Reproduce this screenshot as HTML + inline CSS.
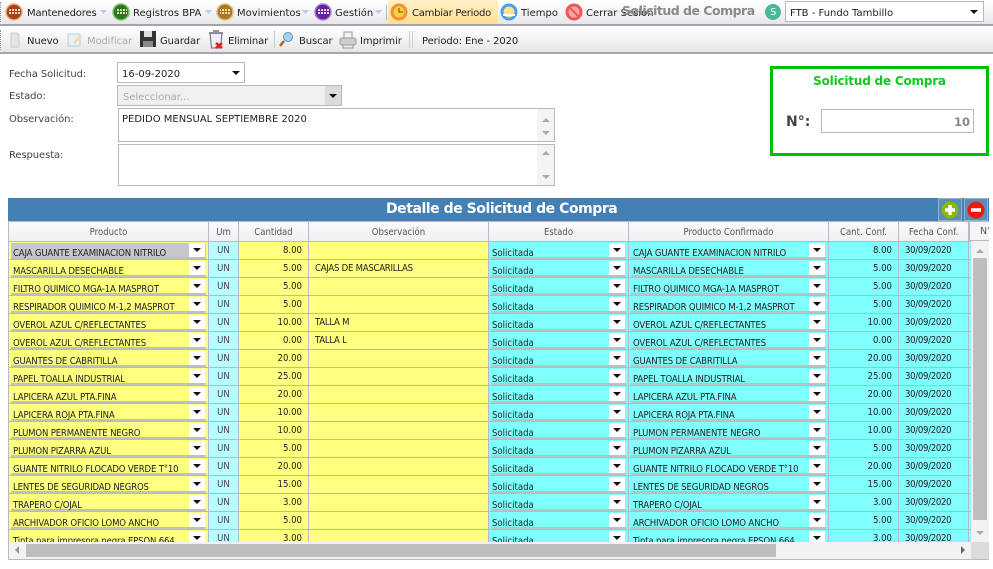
<!DOCTYPE html>
<html><head><meta charset="utf-8"><style>
*{box-sizing:border-box}
html,body{margin:0;padding:0;width:993px;height:569px;overflow:hidden;background:#fff;font:10px "DejaVu Sans","Liberation Sans",sans-serif;color:#222}
.a{position:absolute;white-space:nowrap}
.bar{position:absolute;left:0;width:993px;background:linear-gradient(#fff,#f4f4f6 50%,#e6e6ea);border-bottom:2px solid #a4a4ac}
.t{position:absolute;white-space:nowrap;line-height:12px}
.dis{color:#aaa}
svg{position:absolute;overflow:visible}
.box{position:absolute;border:1px solid #b2b8c4;background:#fff}
.tri{position:absolute;width:0;height:0;border-left:4px solid transparent;border-right:4px solid transparent;border-top:4px solid #111}
.lab{position:absolute;color:#444;line-height:12px;letter-spacing:-.1px}
.up{position:absolute;width:0;height:0;border-left:4px solid transparent;border-right:4px solid transparent;border-bottom:4px solid #aaa}
.dn{position:absolute;width:0;height:0;border-left:4px solid transparent;border-right:4px solid transparent;border-top:4px solid #aaa}
#g{position:absolute;left:8px;top:222px;width:963px;height:320px;overflow:hidden;font-family:"DejaVu Sans Condensed","DejaVu Sans",sans-serif;font-stretch:condensed}
table{border-collapse:collapse;table-layout:fixed;width:963px}
th{height:19px;padding:2px 0 0;font-weight:normal;color:#555;text-align:center;background:linear-gradient(#fafafc,#f0f0f2);border:1px solid #b4bac6;border-top:0;font-size:9.5px;overflow:hidden;white-space:nowrap}
td{height:18px;padding:0;border:1px solid #b4bac6;overflow:hidden;white-space:nowrap;position:relative;vertical-align:top;line-height:13px;font-size:9.5px}
.y{background:#ffff80}.c{background:#80ffff}
.c.u{background:#b8fcff}
.n{text-align:right;padding-right:6px;padding-top:2px}
.u{text-align:center;padding-top:2px;color:#445}
.o{padding:2px 0 0 6px;letter-spacing:-.25px}
.d{text-align:left;padding:2px 0 0 6px;letter-spacing:-.3px}
.s{position:absolute;left:2px;right:2px;top:1px;height:17px;border-bottom:3px solid #c0c0c4;padding:4px 0 0 1px;line-height:13px}
td:nth-child(1) .s,td:nth-child(6) .s{padding-left:2px;letter-spacing:-.17px}
.s i{position:absolute;right:1px;top:0;width:16px;height:14px;background:#fff}
.s i:after{content:"";position:absolute;left:4px;top:5px;border-left:4px solid transparent;border-right:4px solid transparent;border-top:4px solid #111}
.g1 .s.pp{background:#c8c8cc}
#tb2 .t{letter-spacing:-.1px}
</style></head><body>

<div class="bar" style="top:0;height:26px"></div>
<div class="bar" style="top:26px;height:28px"></div>
<div class="a" style="left:388px;top:0;width:110px;height:24px;background:linear-gradient(#fff0c8,#ffdf90)"></div>
<div class="a" style="left:0;top:2px;width:2px;height:20px;border-left:1px dotted #999"></div>
<div class="a" style="left:0;top:30px;width:2px;height:20px;border-left:1px dotted #999"></div>

<svg style="left:0;top:0" width="993" height="54">
<defs><pattern id="dt" width="3" height="3" patternUnits="userSpaceOnUse"><rect width="2" height="2" fill="#e8d8c8"/></pattern></defs>
<circle cx="14" cy="12" r="8" fill="#a8401e" stroke="#f0b080" stroke-width="1.500"/><rect x="9" y="9" width="11" height="6" fill="url(#dt)"/>
<circle cx="121" cy="12" r="8" fill="#267a1c" stroke="#80c070" stroke-width="1.500"/><rect x="116" y="9" width="11" height="6" fill="url(#dt)"/>
<circle cx="225" cy="12" r="8" fill="#a87820" stroke="#e0c070" stroke-width="1.500"/><rect x="220" y="9" width="11" height="6" fill="url(#dt)"/>
<circle cx="323" cy="12" r="8" fill="#66229a" stroke="#b080d8" stroke-width="1.500"/><rect x="318" y="9" width="11" height="6" fill="url(#dt)"/>
<path d="M100 10h7l-3.500 4zM205 10h7l-3.500 4zM302 10h7l-3.500 4zM375 10h7l-3.500 4z" fill="#b4cce8"/>
<path d="M386.500 5v15" stroke="#bbb"/>
<circle cx="399" cy="12" r="7" fill="#f8d040" stroke="#f09038" stroke-width="3"/><path d="M399 8v4h4" stroke="#a06010" stroke-width="1.300" fill="none"/>
<circle cx="509" cy="12" r="7" fill="#ffe090" stroke="#48a0e8" stroke-width="3"/><path d="M503 15h12" stroke="#fff" stroke-width="2"/>
<circle cx="574" cy="12" r="7" fill="#f8a8a8" stroke="#f05858" stroke-width="3"/><path d="M570 8l8 8" stroke="#f05858" stroke-width="2.200"/>
<circle cx="773" cy="12" r="8" fill="#48b898"/>
<path d="M11 33h6l2 2v12h-8z" fill="#e4e4e4" stroke="#ccc"/>
<path d="M68 34h12v12h-12z" fill="#e8f0f8" stroke="#b8cce0"/><path d="M73 42l7-7 2 2-7 7z" fill="#f0dca0"/>
<path d="M140 31h16v16h-16z" fill="#333"/><rect x="144" y="31" width="8" height="6" fill="#ddd"/><rect x="143" y="41" width="10" height="6" fill="#888"/>
<path d="M210 33h12l-1.500 15h-9z" fill="#eef" stroke="#667"/><path d="M209 33h14M213 31h6" stroke="#556" stroke-width="1.300"/>
<path d="M216 43l6 5M222 43l-6 5" stroke="#e02020" stroke-width="2.500"/>
<circle cx="288" cy="37" r="4.500" fill="#a8d0f0" stroke="#6890b8"/><path d="M284 41l-4 5" stroke="#a86830" stroke-width="2.500"/>
<path d="M344 32h8v6h-8z" fill="#f4f4f4" stroke="#999"/><rect x="340" y="38" width="16" height="7" rx="2" fill="#ccc" stroke="#999"/><path d="M343 45h10v3h-10z" fill="#eee" stroke="#999"/>
<path d="M274.500 31v17M409.500 31v17M412.500 31v17" stroke="#ccc"/>
</svg>
<div class="t" style="left:27px;top:8px;letter-spacing:-.15px">Mantenedores</div>
<div class="t" style="left:133px;top:8px">Registros BPA</div>
<div class="t" style="left:237px;top:8px">Movimientos</div>
<div class="t" style="left:335px;top:8px">Gestión</div>
<div class="t" style="left:412px;top:8px;letter-spacing:-.25px">Cambiar Periodo</div>
<div class="t" style="left:521px;top:8px">Tiempo</div>
<div class="t" style="left:586px;top:8px">Cerrar Sesión</div>
<div class="t" style="left:622px;top:3px;font-weight:bold;font-size:12.500px;letter-spacing:-.5px;color:#8a8a8a;line-height:15px">Solicitud de Compra</div>
<div class="t" style="left:770px;top:7px;color:#fff">S</div>
<div class="box" style="left:785px;top:1px;width:199px;height:21px;border-color:#b0b8cc"></div>
<div class="t" style="left:790px;top:8px">FTB - Fundo Tambillo</div>
<div class="tri" style="left:970px;top:10px"></div>
<div id="tb2">
<div class="t" style="left:27px;top:36px">Nuevo</div>
<div class="t dis" style="left:87px;top:36px">Modificar</div>
<div class="t" style="left:160px;top:36px">Guardar</div>
<div class="t" style="left:228px;top:36px">Eliminar</div>
<div class="t" style="left:299px;top:36px">Buscar</div>
<div class="t" style="left:360px;top:36px">Imprimir</div>
<div class="t" style="left:422px;top:36px">Periodo: Ene - 2020</div>
</div>

<div class="lab" style="left:9px;top:69px">Fecha Solicitud:</div>
<div class="lab" style="left:9px;top:91px">Estado:</div>
<div class="lab" style="left:9px;top:114px">Observación:</div>
<div class="lab" style="left:9px;top:150px">Respuesta:</div>
<div class="box" style="top:62px;height:21px;left:117px;width:128px"></div>
<div class="t" style="left:122px;top:69px">16-09-2020</div>
<div class="tri" style="left:232px;top:71px"></div>
<div class="box" style="left:117px;top:85px;width:225px;height:21px;background:#f0f0f0"></div>
<div class="a" style="left:325px;top:86px;width:16px;height:19px;background:#dcdcdc"></div>
<div class="t" style="left:123px;top:92px;color:#aaa">Seleccionar...</div>
<div class="tri" style="left:329px;top:94px"></div>
<div class="box" style="left:118px;top:108px;width:437px;height:34px"></div>
<div class="a" style="left:537px;top:109px;width:17px;height:32px;background:#f4f4f4"></div>
<div class="t" style="left:122px;top:114px">PEDIDO MENSUAL SEPTIEMBRE 2020</div>
<div class="up" style="left:542px;top:118px"></div><div class="dn" style="left:542px;top:131px"></div>
<div class="box" style="left:118px;top:144px;width:437px;height:42px"></div>
<div class="a" style="left:537px;top:145px;width:17px;height:40px;background:#f4f4f4"></div>
<div class="up" style="left:542px;top:151px"></div><div class="dn" style="left:542px;top:175px"></div>

<div class="a" style="left:770px;top:66px;width:219px;height:90px;border:3px solid #00c000"></div>
<div class="t" style="left:770px;width:219px;text-align:center;top:74px;font-weight:bold;font-size:12px;letter-spacing:-.2px;line-height:14px;color:#10c820">Solicitud de Compra</div>
<div class="t" style="left:786px;top:114px;font-weight:bold;font-size:14px;line-height:16px;color:#444">N°:</div>
<div class="box" style="left:821px;top:109px;width:153px;height:24px"></div>
<div class="t" style="left:821px;width:149px;text-align:right;top:116px;font-weight:bold;font-size:11.500px;color:#888">10</div>

<div class="a" style="left:8px;top:198px;width:981px;height:362px;border:1px solid #b4bac6;border-top:0"></div>
<div class="a" style="left:8px;top:198px;width:981px;height:24px;background:#4580b4;border-bottom:1px solid #b4bac6"></div>
<div class="t" style="left:386px;top:200px;font-weight:bold;font-size:14px;letter-spacing:-.45px;line-height:18px;color:#fff">Detalle de Solicitud de Compra</div>
<svg style="left:938px;top:198px" width="52" height="24">
<rect x=".5" y=".5" width="23" height="22" fill="#5a8cb8" stroke="#9ab0c8"/><rect x="26.500" y=".5" width="23" height="22" fill="#5a8cb8" stroke="#9ab0c8"/>
<circle cx="12" cy="12" r="8.500" fill="#88b808"/><path d="M7 12h10M12 7v10" stroke="#fff" stroke-width="3.500"/>
<circle cx="38" cy="12" r="8.500" fill="#f01808"/><path d="M33 12h10" stroke="#fff" stroke-width="3.500"/>
</svg>

<div id="g"><table class="g1">
<colgroup><col style="width:200px"><col style="width:30px"><col style="width:70px"><col style="width:180px"><col style="width:140px"><col style="width:200px"><col style="width:70px"><col style="width:70px"><col style="width:3px"></colgroup>
<tr><th>Producto</th><th>Um</th><th>Cantidad</th><th>Observación</th><th>Estado</th><th>Producto Confirmado</th><th>Cant. Conf.</th><th>Fecha Conf.</th><th></th></tr>
<tr><td class="y"><div class="s pp">CAJA GUANTE EXAMINACION NITRILO<i></i></div></td><td class="c u">UN</td><td class="y n">8.00</td><td class="y o"></td><td class="c"><div class="s">Solicitada<i></i></div></td><td class="c"><div class="s">CAJA GUANTE EXAMINACION NITRILO<i></i></div></td><td class="c n">8.00</td><td class="c d">30/09/2020</td><td class="c"></td></tr>
<tr><td class="y"><div class="s">MASCARILLA DESECHABLE<i></i></div></td><td class="c u">UN</td><td class="y n">5.00</td><td class="y o">CAJAS DE MASCARILLAS</td><td class="c"><div class="s">Solicitada<i></i></div></td><td class="c"><div class="s">MASCARILLA DESECHABLE<i></i></div></td><td class="c n">5.00</td><td class="c d">30/09/2020</td><td class="c"></td></tr>
<tr><td class="y"><div class="s">FILTRO QUIMICO MGA-1A MASPROT<i></i></div></td><td class="c u">UN</td><td class="y n">5.00</td><td class="y o"></td><td class="c"><div class="s">Solicitada<i></i></div></td><td class="c"><div class="s">FILTRO QUIMICO MGA-1A MASPROT<i></i></div></td><td class="c n">5.00</td><td class="c d">30/09/2020</td><td class="c"></td></tr>
<tr><td class="y"><div class="s">RESPIRADOR QUIMICO M-1,2 MASPROT<i></i></div></td><td class="c u">UN</td><td class="y n">5.00</td><td class="y o"></td><td class="c"><div class="s">Solicitada<i></i></div></td><td class="c"><div class="s">RESPIRADOR QUIMICO M-1,2 MASPROT<i></i></div></td><td class="c n">5.00</td><td class="c d">30/09/2020</td><td class="c"></td></tr>
<tr><td class="y"><div class="s">OVEROL AZUL C/REFLECTANTES<i></i></div></td><td class="c u">UN</td><td class="y n">10.00</td><td class="y o">TALLA M</td><td class="c"><div class="s">Solicitada<i></i></div></td><td class="c"><div class="s">OVEROL AZUL C/REFLECTANTES<i></i></div></td><td class="c n">10.00</td><td class="c d">30/09/2020</td><td class="c"></td></tr>
<tr><td class="y"><div class="s">OVEROL AZUL C/REFLECTANTES<i></i></div></td><td class="c u">UN</td><td class="y n">0.00</td><td class="y o">TALLA L</td><td class="c"><div class="s">Solicitada<i></i></div></td><td class="c"><div class="s">OVEROL AZUL C/REFLECTANTES<i></i></div></td><td class="c n">0.00</td><td class="c d">30/09/2020</td><td class="c"></td></tr>
<tr><td class="y"><div class="s">GUANTES DE CABRITILLA<i></i></div></td><td class="c u">UN</td><td class="y n">20.00</td><td class="y o"></td><td class="c"><div class="s">Solicitada<i></i></div></td><td class="c"><div class="s">GUANTES DE CABRITILLA<i></i></div></td><td class="c n">20.00</td><td class="c d">30/09/2020</td><td class="c"></td></tr>
<tr><td class="y"><div class="s">PAPEL TOALLA INDUSTRIAL<i></i></div></td><td class="c u">UN</td><td class="y n">25.00</td><td class="y o"></td><td class="c"><div class="s">Solicitada<i></i></div></td><td class="c"><div class="s">PAPEL TOALLA INDUSTRIAL<i></i></div></td><td class="c n">25.00</td><td class="c d">30/09/2020</td><td class="c"></td></tr>
<tr><td class="y"><div class="s">LAPICERA AZUL PTA.FINA<i></i></div></td><td class="c u">UN</td><td class="y n">20.00</td><td class="y o"></td><td class="c"><div class="s">Solicitada<i></i></div></td><td class="c"><div class="s">LAPICERA AZUL PTA.FINA<i></i></div></td><td class="c n">20.00</td><td class="c d">30/09/2020</td><td class="c"></td></tr>
<tr><td class="y"><div class="s">LAPICERA ROJA PTA.FINA<i></i></div></td><td class="c u">UN</td><td class="y n">10.00</td><td class="y o"></td><td class="c"><div class="s">Solicitada<i></i></div></td><td class="c"><div class="s">LAPICERA ROJA PTA.FINA<i></i></div></td><td class="c n">10.00</td><td class="c d">30/09/2020</td><td class="c"></td></tr>
<tr><td class="y"><div class="s">PLUMON PERMANENTE NEGRO<i></i></div></td><td class="c u">UN</td><td class="y n">10.00</td><td class="y o"></td><td class="c"><div class="s">Solicitada<i></i></div></td><td class="c"><div class="s">PLUMON PERMANENTE NEGRO<i></i></div></td><td class="c n">10.00</td><td class="c d">30/09/2020</td><td class="c"></td></tr>
<tr><td class="y"><div class="s">PLUMON PIZARRA AZUL<i></i></div></td><td class="c u">UN</td><td class="y n">5.00</td><td class="y o"></td><td class="c"><div class="s">Solicitada<i></i></div></td><td class="c"><div class="s">PLUMON PIZARRA AZUL<i></i></div></td><td class="c n">5.00</td><td class="c d">30/09/2020</td><td class="c"></td></tr>
<tr><td class="y"><div class="s">GUANTE NITRILO FLOCADO VERDE T°10<i></i></div></td><td class="c u">UN</td><td class="y n">20.00</td><td class="y o"></td><td class="c"><div class="s">Solicitada<i></i></div></td><td class="c"><div class="s">GUANTE NITRILO FLOCADO VERDE T°10<i></i></div></td><td class="c n">20.00</td><td class="c d">30/09/2020</td><td class="c"></td></tr>
<tr><td class="y"><div class="s">LENTES DE SEGURIDAD NEGROS<i></i></div></td><td class="c u">UN</td><td class="y n">15.00</td><td class="y o"></td><td class="c"><div class="s">Solicitada<i></i></div></td><td class="c"><div class="s">LENTES DE SEGURIDAD NEGROS<i></i></div></td><td class="c n">15.00</td><td class="c d">30/09/2020</td><td class="c"></td></tr>
<tr><td class="y"><div class="s">TRAPERO C/OJAL<i></i></div></td><td class="c u">UN</td><td class="y n">3.00</td><td class="y o"></td><td class="c"><div class="s">Solicitada<i></i></div></td><td class="c"><div class="s">TRAPERO C/OJAL<i></i></div></td><td class="c n">3.00</td><td class="c d">30/09/2020</td><td class="c"></td></tr>
<tr><td class="y"><div class="s">ARCHIVADOR OFICIO LOMO ANCHO<i></i></div></td><td class="c u">UN</td><td class="y n">5.00</td><td class="y o"></td><td class="c"><div class="s">Solicitada<i></i></div></td><td class="c"><div class="s">ARCHIVADOR OFICIO LOMO ANCHO<i></i></div></td><td class="c n">5.00</td><td class="c d">30/09/2020</td><td class="c"></td></tr>
<tr><td class="y"><div class="s">Tinta para impresora negra EPSON 664<i></i></div></td><td class="c u">UN</td><td class="y n">3.00</td><td class="y o"></td><td class="c"><div class="s">Solicitada<i></i></div></td><td class="c"><div class="s">Tinta para impresora negra EPSON 664<i></i></div></td><td class="c n">3.00</td><td class="c d">30/09/2020</td><td class="c"></td></tr>
</table></div>

<div class="a" style="left:969px;top:222px;width:20px;height:19px;background:#f4f4f6;border-bottom:1px solid #b4bac6;border-left:1px solid #b4bac6;color:#555;font-size:9.500px;line-height:19px;padding-left:10px;overflow:hidden">N°</div>
<div class="a" style="left:971px;top:241px;width:18px;height:301px;background:#f2f2f2"></div>
<div class="a" style="left:973px;top:258px;width:14px;height:262px;background:#bebebe"></div>
<div class="up" style="left:976px;top:249px"></div><div class="dn" style="left:976px;top:531px"></div>
<div class="a" style="left:9px;top:542px;width:962px;height:17px;background:#f2f2f2"></div>
<div class="a" style="left:26px;top:544px;width:750px;height:13px;background:#bebebe"></div>
<div class="a" style="left:971px;top:542px;width:18px;height:17px;background:#dcdcdc"></div>
<div class="a" style="left:15px;top:546px;border-top:4px solid transparent;border-bottom:4px solid transparent;border-right:4px solid #999"></div>
<div class="a" style="left:961px;top:546px;border-top:4px solid transparent;border-bottom:4px solid transparent;border-left:4px solid #666"></div>
</body></html>
